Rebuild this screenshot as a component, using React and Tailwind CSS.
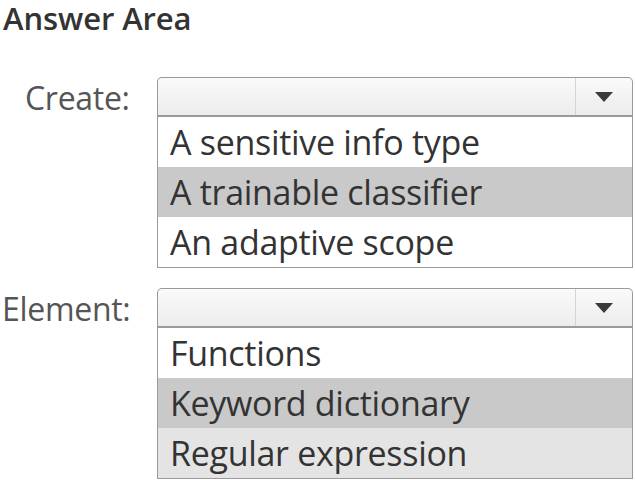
import React from 'react';

const Caret = () => (
  <svg width="20" height="12" viewBox="0 0 20 12">
    <path d="M1 1 L19 1 L10 11 Z" fill="#3a3a3a" />
  </svg>
);

const Dropdown = ({ label, labelClass, options }) => (
  <div className="flex items-start">
    <div className={`w-[157px] pt-[5px] text-[32px] text-[#555] leading-none tracking-[-0.3px] ${labelClass}`}>{label}</div>
    <div className="flex-1 mr-[2px]">
      <div className="flex h-[40px] rounded-t-[5px] border border-b-2 border-[#9a9a9a] bg-gradient-to-b from-[#fafafa] to-[#ececec]">
        <div className="flex-1" />
        <div className="flex w-[57px] items-center justify-center border-l border-[#d4d4d4]">
          <Caret />
        </div>
      </div>
      <div className="border-x border-b border-[#9a9a9a]">
        {options.map((o) => (
          <div
            key={o.text}
            className={`flex h-[50px] items-center pl-[12px] text-[34px] leading-none text-[#333] tracking-[-0.3px] ${o.bg}`}
          >
            {o.text}
          </div>
        ))}
      </div>
    </div>
  </div>
);

export default function App() {
  return (
    <div className="w-[635px] h-[480px] bg-white" style={{ fontFamily: '"Open Sans", "Noto Sans", sans-serif' }}>
      <div className="pl-[3px] pt-[2px] text-[31px] font-semibold leading-[32px] text-[#333] tracking-[-0.1px]">Answer Area</div>
      <div className="mt-[43px]">
        <Dropdown
          label="Create:"
          labelClass="pl-[25px]"
          options={[
            { text: 'A sensitive info type', bg: 'bg-white' },
            { text: 'A trainable classifier', bg: 'bg-[#c9c9c9]' },
            { text: 'An adaptive scope', bg: 'bg-white' },
          ]}
        />
      </div>
      <div className="mt-[20px]">
        <Dropdown
          label="Element:"
          labelClass="pl-[2px]"
          options={[
            { text: 'Functions', bg: 'bg-white' },
            { text: 'Keyword dictionary', bg: 'bg-[#c9c9c9]' },
            { text: 'Regular expression', bg: 'bg-[#e4e4e4]' },
          ]}
        />
      </div>
    </div>
  );
}
